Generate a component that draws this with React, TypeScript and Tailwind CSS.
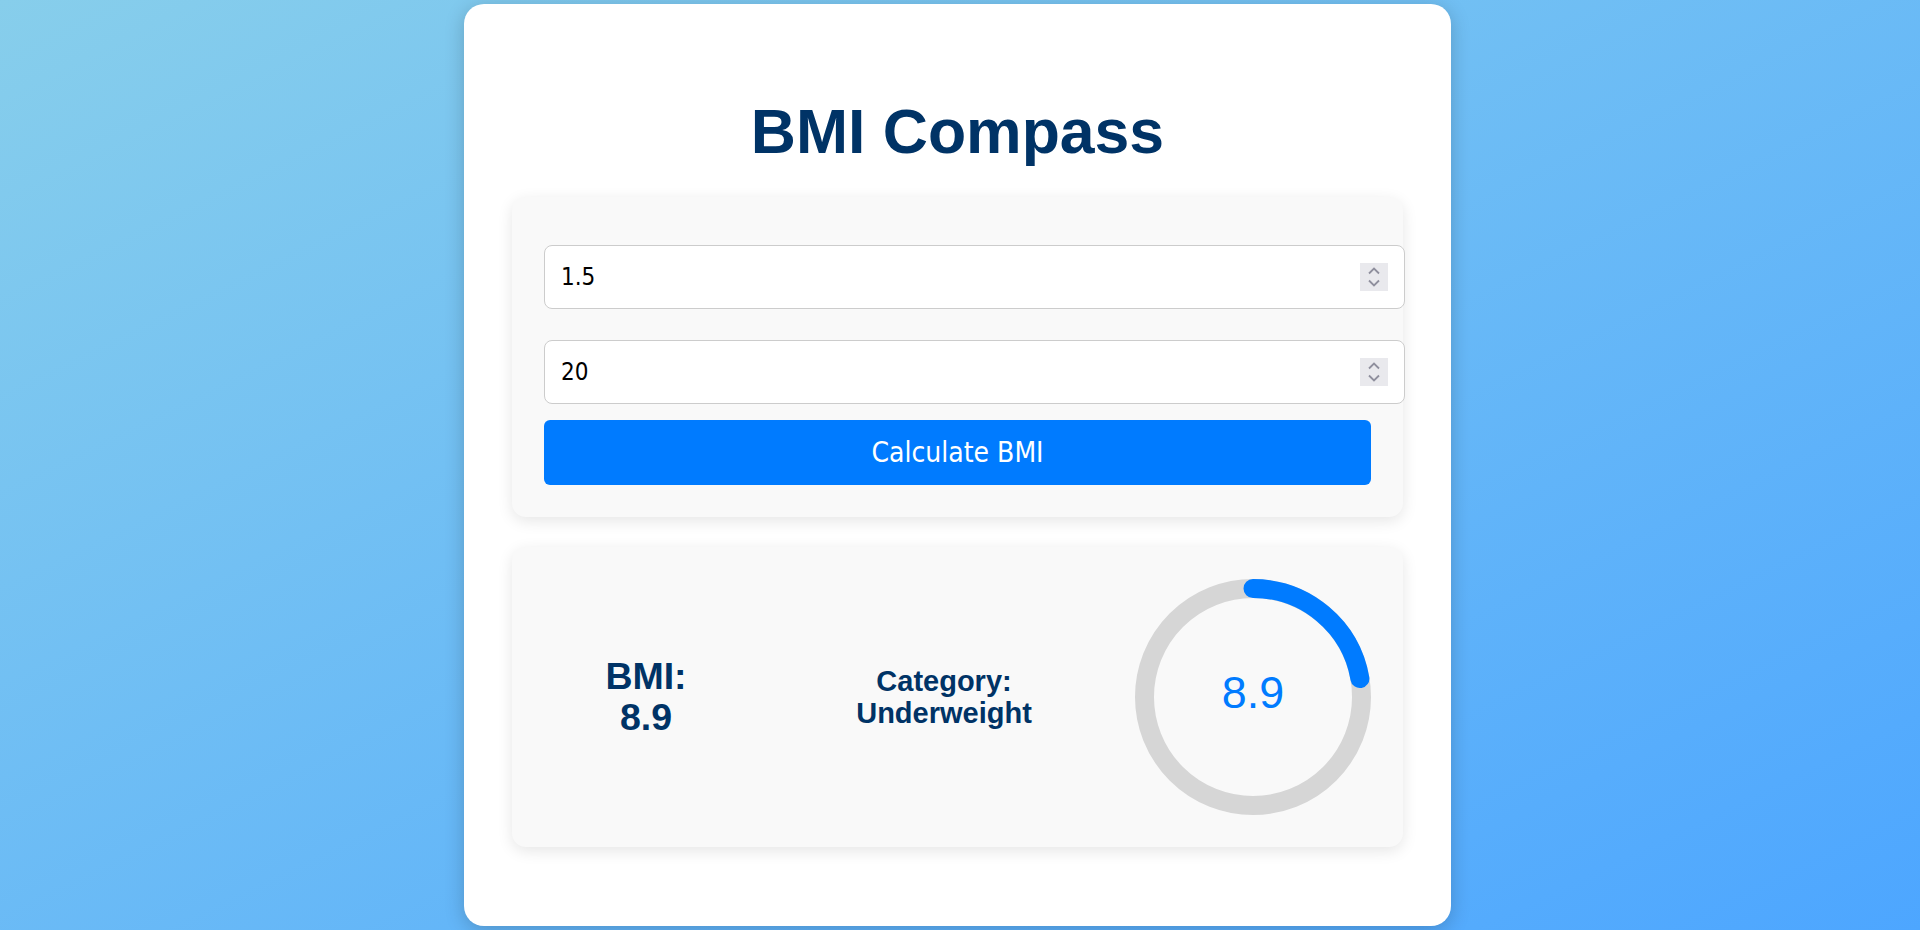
import { useState } from 'react'

function Spinner() {
  return (
    <svg width="28" height="28" viewBox="0 0 28 28" className="pointer-events-none absolute right-[17px] top-1/2 -translate-y-1/2">
      <rect width="28" height="28" fill="#e9e9ed" />
      <path d="M9 10.5 L14 5.5 L19 10.5" fill="none" stroke="#8f8f9d" strokeWidth="1.8" />
      <path d="M9 17.5 L14 22.5 L19 17.5" fill="none" stroke="#8f8f9d" strokeWidth="1.8" />
    </svg>
  )
}

function NumberField({ value, onChange, className }: { value: string; onChange: (v: string) => void; className?: string }) {
  return (
    <div className={`relative w-[calc(100%+34px)] ${className ?? ''}`}>
      <input
        type="number"
        value={value}
        onChange={(e) => onChange(e.target.value)}
        className="block h-[64px] w-full rounded-lg border border-[#cccccc] bg-white px-4 text-[24px] text-black outline-none [appearance:textfield] [&::-webkit-inner-spin-button]:appearance-none [&::-webkit-outer-spin-button]:appearance-none"
        style={{ fontFamily: '"DejaVu Sans Condensed", "DejaVu Sans", sans-serif' }}
      />
      <Spinner />
    </div>
  )
}

function Gauge({ bmi }: { bmi: number }) {
  const r = 108.5
  const c = 2 * Math.PI * r
  const progress = Math.min(bmi / 40, 1)
  return (
    <svg width="236" height="236" viewBox="0 0 236 236" className="shrink-0">
      <circle cx="118" cy="118" r={r} fill="none" stroke="#d6d6d6" strokeWidth="19" />
      <circle
        cx="118"
        cy="118"
        r={r}
        fill="none"
        stroke="#007bff"
        strokeWidth="19"
        strokeLinecap="round"
        strokeDasharray={`${c * progress} ${c}`}
        transform="rotate(-90 118 118)"
      />
      <text x="118" y="129" textAnchor="middle" fill="#007bff" fontSize="44.8" fontFamily="'Liberation Sans', Arial, sans-serif">
        {bmi.toFixed(1)}
      </text>
    </svg>
  )
}

function category(bmi: number) {
  if (bmi < 18.5) return 'Underweight'
  if (bmi < 25) return 'Normal'
  if (bmi < 30) return 'Overweight'
  return 'Obese'
}

export default function App() {
  const [height, setHeight] = useState('1.5')
  const [weight, setWeight] = useState('20')
  const [bmi, setBmi] = useState(8.9)

  const calculate = () => {
    const h = parseFloat(height)
    const w = parseFloat(weight)
    if (h > 0 && w > 0) setBmi(Math.round((w / (h * h)) * 10) / 10)
  }

  return (
    <div
      className="flex min-h-screen items-center justify-center bg-gradient-to-br from-[#87ceeb] to-[#4da6ff] pr-[5px]"
      style={{ fontFamily: '"Liberation Sans", Arial, sans-serif' }}
    >
      <div className="flex w-[987px] flex-col rounded-[20px] bg-white px-12 pt-12 pb-[79px] shadow-[0_4px_20px_rgba(0,0,0,0.2)]">
        <h1 className="mt-[42px] text-center text-[62.5px] leading-[74px] font-bold text-[#003366]">BMI Compass</h1>

        <div className="mt-[29px] flex flex-col rounded-[14px] bg-[#f9f9f9] p-8 shadow-[0_4px_15px_rgba(0,0,0,0.1)]">
          <NumberField value={height} onChange={setHeight} className="mt-4" />
          <NumberField value={weight} onChange={setWeight} className="mt-[31px]" />
          <button
            onClick={calculate}
            className="mt-4 h-[65px] w-full rounded-md bg-[#007bff] text-[28px] text-white"
            style={{ fontFamily: '"DejaVu Sans Condensed", "DejaVu Sans", sans-serif' }}
          >
            Calculate BMI
          </button>
        </div>

        <div className="mt-[30px] flex items-center rounded-[14px] bg-[#f9f9f9] p-8 shadow-[0_4px_15px_rgba(0,0,0,0.1)]">
          <div className="w-[204px] text-center text-[37.5px] leading-[41px] font-bold text-[#003366]">
            <div>BMI:</div>
            <div>{bmi.toFixed(1)}</div>
          </div>
          <div className="ml-[94px] w-[204px] text-center text-[29px] leading-[32px] font-bold text-[#003366]">
            <div>Category:</div>
            <div>{category(bmi)}</div>
          </div>
          <div className="ml-auto">
            <Gauge bmi={bmi} />
          </div>
        </div>
      </div>
    </div>
  )
}
